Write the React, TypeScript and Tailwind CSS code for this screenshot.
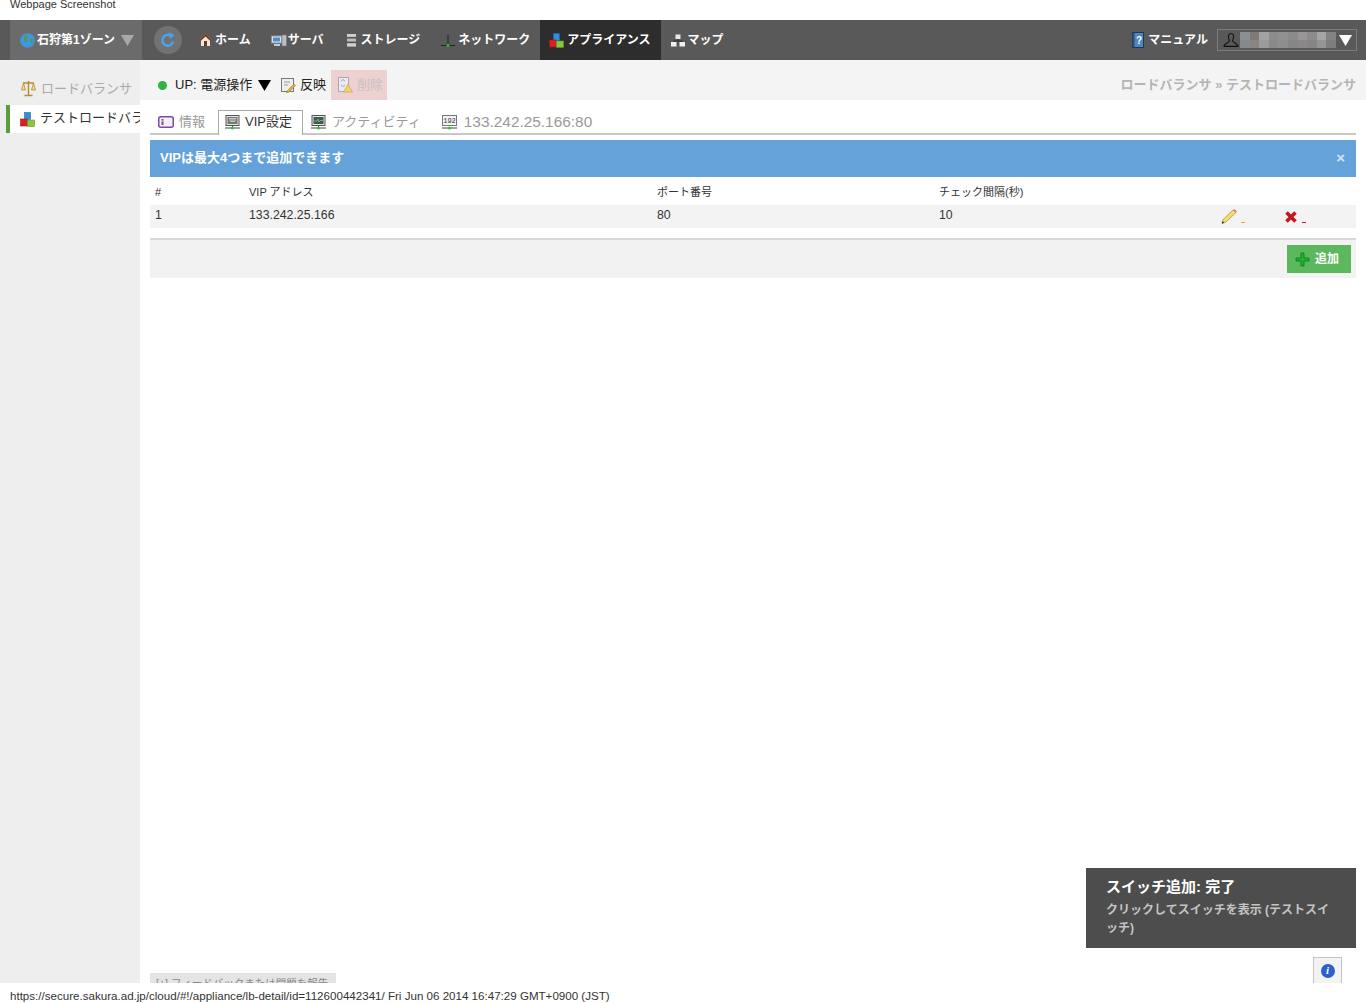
import React from 'react';

const font = "font-['Liberation_Sans','Noto_Sans_CJK_JP',sans-serif]";

const Triangle = ({ className }: { className: string }) => (
  <svg width="13" height="11" viewBox="0 0 13 11" className={`shrink-0 ${className}`}>
    <path d="M0 0 H13 L6.5 11 Z" fill="currentColor" />
  </svg>
);

const Globe = () => (
  <svg width="15" height="15" viewBox="0 0 16 16" className="shrink-0">
    <circle cx="8" cy="8" r="7.8" fill="#3f97e0" />
    <path d="M4 3 L7.5 2 L9 3.5 L7 6.5 L7.5 9 L5.8 11 L4.5 8 Z" fill="#4c9a5e" />
    <path d="M10.5 6.5 L14.5 6.5 L14 9.5 L11.5 11.5 Z" fill="#4c9a5e" />
  </svg>
);

const Refresh = () => (
  <svg width="16" height="16" viewBox="0 0 16 16">
    <path d="M13.2 9.5 A5.5 5.5 0 1 1 10.5 3.4" fill="none" stroke="#45a6f2" strokeWidth="2.4" />
    <path d="M9 0.5 L14.5 3 L10 7 Z" fill="#45a6f2" />
  </svg>
);

const HomeIcon = () => (
  <svg width="13" height="14" viewBox="0 0 13 14" className="shrink-0">
    <path d="M6.5 1 L12.5 7 L11 7 L11 13 L2 13 L2 7 L0.5 7 Z" fill="#efe6d6" />
    <path d="M6.5 1 L12.5 7 L10.8 7.6 L6.5 3.4 L2.2 7.6 L0.5 7 Z" fill="#7a2f1c" />
    <rect x="5" y="8" width="3" height="5" fill="#6a3a20" />
  </svg>
);

const ServerIcon = () => (
  <svg width="16" height="13" viewBox="0 0 16 13" className="shrink-0">
    <rect x="0.5" y="2" width="10" height="7" fill="#dfe6ee" stroke="#8795a3" />
    <rect x="2" y="3.5" width="7" height="4" fill="#4d8fd0" />
    <rect x="3" y="10" width="6" height="2" fill="#c5cbd2" />
    <rect x="11" y="1" width="4.5" height="11" fill="#b9bfc6" stroke="#777" strokeWidth="0.6" />
  </svg>
);

const StorageIcon = () => (
  <svg width="9" height="13" viewBox="0 0 9 13" className="shrink-0">
    <rect x="0" y="0" width="9" height="3.4" fill="#cfcfcf" />
    <rect x="0" y="4.6" width="9" height="3.4" fill="#bdbdbd" />
    <rect x="0" y="9.2" width="9" height="3.4" fill="#cfcfcf" />
    <path d="M0 3.4 H9 M0 8 H9" stroke="#444" strokeWidth="0.8" />
  </svg>
);

const NetIcon = () => (
  <svg width="14" height="13" viewBox="0 0 14 13" className="shrink-0">
    <path d="M7 1 V11" stroke="#222" strokeWidth="1" />
    <path d="M0 11.5 H14" stroke="#222" strokeWidth="1" />
    <circle cx="7" cy="11.5" r="1.4" fill="#35c13a" />
  </svg>
);

const Blocks = () => (
  <svg width="15" height="15" viewBox="0 0 15 15" className="shrink-0">
    <rect x="4.5" y="0.5" width="6" height="7" fill="#2f8fd8" stroke="#1e6aa8" strokeWidth="0.6" />
    <rect x="0.5" y="7" width="7" height="7" fill="#dc1f26" stroke="#a3141a" strokeWidth="0.6" />
    <rect x="7.5" y="8" width="7" height="6.5" fill="#8cc63f" stroke="#659a25" strokeWidth="0.6" />
  </svg>
);

const MapIcon = () => (
  <svg width="14" height="13" viewBox="0 0 14 13" className="shrink-0">
    <rect x="4.5" y="0.5" width="5" height="4.5" fill="#e8e8e8" />
    <rect x="0" y="8" width="5.5" height="4.5" fill="#f0f0f0" />
    <rect x="8.5" y="8" width="5.5" height="4.5" fill="#f0f0f0" />
    <path d="M7 5 V7 M3 8 V7 H11 V8" stroke="#222" strokeWidth="0.8" fill="none" />
  </svg>
);

const BookIcon = () => (
  <svg width="12" height="16" viewBox="0 0 12 16" className="shrink-0">
    <rect x="0.5" y="0.5" width="11" height="15" fill="#4f86c0" stroke="#22364d" />
    <rect x="0.5" y="0.5" width="2" height="15" fill="#2d4f75" />
    <text x="7" y="12" fontSize="10" fill="#fff" textAnchor="middle" fontFamily="Liberation Sans">?</text>
  </svg>
);

const UserIcon = () => (
  <svg width="16" height="16" viewBox="0 0 15 15" className="shrink-0">
    <path d="M5 3.5 A2.6 3 0 0 1 10 3.5 C10 6 9 7.5 9 8.5 C9 10 14 10.5 14 13.5 L1 13.5 C1 10.5 6 10 6 8.5 C6 7.5 5 6 5 3.5 Z" fill="none" stroke="#111" strokeWidth="1" />
  </svg>
);

const Scale = () => (
  <svg width="15" height="17" viewBox="0 0 15 17" className="shrink-0">
    <path d="M7.5 1 V15 M3.5 15.5 H11.5 M2 3 H13" stroke="#b8892e" strokeWidth="1.4" />
    <path d="M2.5 3 L0.5 10 H4.5 Z M12.5 3 L10.5 10 H14.5 Z" fill="#ecd9a6" stroke="#b8892e" strokeWidth="0.8" />
  </svg>
);

const ApplyIcon = () => (
  <svg width="15" height="15" viewBox="0 0 15 15" className="shrink-0">
    <rect x="0.5" y="0.5" width="12" height="13" fill="#eee" stroke="#777" />
    <path d="M3 4 H9 M3 7 H7" stroke="#999" strokeWidth="1" />
    <path d="M6 13 L13 6 L14.5 7.5 L7.5 14.5 L5.5 15 Z" fill="#e4b23c" stroke="#8a6a1e" strokeWidth="0.5" />
  </svg>
);

const DeleteIcon = () => (
  <svg width="15" height="16" viewBox="0 0 15 16" className="shrink-0 opacity-80">
    <rect x="0.5" y="0.5" width="10" height="14" fill="#eef0f5" stroke="#9a9fb0" />
    <path d="M3 4 L5 2.5 L7 4 M3 8 L5 9.5 L7 8" stroke="#7d93c9" strokeWidth="0.9" fill="none" />
    <path d="M10 7 L14.5 15 H5.5 Z" fill="#f0d24a" stroke="#a88f1e" strokeWidth="0.5" />
  </svg>
);

const InfoTab = () => (
  <svg width="16" height="12" viewBox="0 0 16 12" className="shrink-0">
    <rect x="0.75" y="0.75" width="14.5" height="10.5" rx="2" fill="#f3eef8" stroke="#7b4a9e" strokeWidth="1.5" />
    <rect x="3.5" y="3" width="2" height="1.6" fill="#7b4a9e" />
    <rect x="3.5" y="5.4" width="2" height="3.6" fill="#7b4a9e" />
  </svg>
);

const Monitor = ({ pulse }: { pulse?: boolean }) => (
  <svg width="15" height="15" viewBox="0 0 15 15" className="shrink-0">
    <rect x="1" y="0.5" width="13" height="10" fill="#e4e4e4" stroke="#555" />
    <rect x="2.5" y="2" width="10" height="7" fill={pulse ? '#44584c' : '#777'} />
    {pulse ? (
      <path d="M3 6 H6 L7 4 L8 7 L9 5.5 H12" stroke="#6fe08a" strokeWidth="0.7" fill="none" />
    ) : (
      <path d="M4 3.5 H11 M4 5 H11 M5 6.5 H10" stroke="#ddd" strokeWidth="0.8" />
    )}
    <path d="M0 13 H15" stroke="#444" strokeWidth="1" />
    <path d="M7.5 10.5 V13" stroke="#444" />
    <circle cx="7.5" cy="13" r="1.5" fill="#35c13a" />
  </svg>
);

const Ip = () => (
  <svg width="15" height="15" viewBox="0 0 15 15" className="shrink-0">
    <rect x="0.5" y="0.5" width="14" height="10" fill="#f4f4f4" stroke="#777" />
    <text x="7.5" y="8" fontSize="7" fill="#333" textAnchor="middle" fontFamily="Liberation Mono">192</text>
    <path d="M0 13 H15" stroke="#444" strokeWidth="1" />
    <circle cx="7.5" cy="13" r="1.5" fill="#35c13a" />
  </svg>
);

const Pencil = () => (
  <svg width="18" height="17" viewBox="0 0 18 16" className="shrink-0">
    <path d="M2 15 L3 11 L13 1.5 L16 4 L6 13.5 Z" fill="#f2dc6b" stroke="#a8903a" strokeWidth="0.7" />
    <path d="M13 1.5 L14.5 0.5 L17 3 L16 4 Z" fill="#e57d7d" />
    <path d="M2 15 L2.6 12.8 L4.2 14.2 Z" fill="#111" />
  </svg>
);

const RedX = () => (
  <svg width="14" height="14" viewBox="0 0 14 14" className="shrink-0">
    <path d="M2.5 2.5 L11.5 11.5 M11.5 2.5 L2.5 11.5" stroke="#c5171c" strokeWidth="3.6" />
  </svg>
);

const PlusIcon = () => (
  <svg width="15" height="15" viewBox="0 0 15 15" className="shrink-0">
    <path d="M6 1 H9 V6 H14 V9 H9 V14 H6 V9 H1 V6 H6 Z" fill="#1fb32f" stroke="#0a7a17" strokeWidth="0.8" />
  </svg>
);

const navItems = [
  { icon: <HomeIcon />, label: 'ホーム', wrap: 'mr-5', gap: 'gap-[3px]' },
  { icon: <ServerIcon />, label: 'サーバ', wrap: 'mr-[23px]', gap: 'gap-[1px]' },
  { icon: <StorageIcon />, label: 'ストレージ', wrap: 'mr-[21px]', gap: 'gap-[5px]' },
  { icon: <NetIcon />, label: 'ネットワーク', wrap: 'mr-[10px]', gap: 'gap-[3px]' },
];

const blur = [
  '#8a8f90', '#7d7a78', '#a3a3a3', '#8d8d8d', '#919191', '#8b8b8b', '#9a9696', '#8c8c8c', '#a5a5a5', '#838383',
  '#84898c', '#8a8482', '#9b9b9b', '#8a8a8a', '#8e8e8e', '#868686', '#8a8888', '#868686', '#949494', '#7d7d7d',
];

export default function App() {
  return (
    <div className={`${font} relative flex h-[1003px] w-[1366px] flex-col overflow-hidden bg-white text-[#333]`}>
      {/* screenshot title */}
      <div className="h-5 shrink-0 overflow-hidden pl-2.5 text-[11px] leading-[9px] text-[#333]">Webpage Screenshot</div>

      {/* top nav */}
      <header className="flex h-10 shrink-0 items-stretch bg-[#595959] pl-2.5 text-[12px] font-bold text-white">
        <div className="flex w-[132px] items-center bg-[#6b6b6b] pl-[10px]">
          <Globe />
          <span className="ml-[2px] w-[80px] whitespace-nowrap">石狩第1ゾーン</span>
          <Triangle className="ml-1 text-[#a8a8a8]" />
        </div>
        <div className="ml-3 flex w-[28px] items-center">
          <div className="flex h-7 w-7 items-center justify-center rounded-full bg-[#727272]">
            <Refresh />
          </div>
        </div>
        <nav className="ml-[17px] flex items-center">
          {navItems.map(item => (
            <div key={item.label} className={`flex items-center ${item.gap} ${item.wrap}`}>
              {item.icon}
              <span className="whitespace-nowrap">{item.label}</span>
            </div>
          ))}
          <div className="flex h-10 items-center gap-[3px] bg-[#2d2d2d] pl-[9px] pr-[10px]">
            <Blocks />
            <span className="whitespace-nowrap">アプライアンス</span>
          </div>
          <div className="ml-[10px] flex items-center gap-[3px]">
            <MapIcon />
            <span className="whitespace-nowrap">マップ</span>
          </div>
        </nav>
        <div className="ml-auto flex items-center pr-[9px]">
          <BookIcon />
          <span className="ml-[4px] whitespace-nowrap">マニュアル</span>
          <div className="ml-[9px] flex h-[22px] w-[140px] items-center border border-[#7d7d7d] pl-[5px]">
            <UserIcon />
            <div className="ml-[1px] grid h-4 w-[96px] grid-cols-10 grid-rows-2">
              {blur.map((c, i) => (
                <div key={i} style={{ backgroundColor: c }} />
              ))}
            </div>
            <Triangle className="ml-[3px] text-white" />
          </div>
        </div>
      </header>

      <div className="flex min-h-0 flex-1">
        {/* sidebar */}
        <aside className="w-[140px] shrink-0 overflow-hidden bg-[#eeeeee] pl-[6px] pt-[21px]">
          <div className="flex h-[15px] items-center gap-[5px] pl-[15px] text-[13px] text-[#aaa]">
            <Scale />
            <span className="whitespace-nowrap">ロードバランサ</span>
          </div>
          <div className="mt-[9px] flex h-7 items-center gap-[5px] overflow-hidden border-l-4 border-[#5a9e3c] bg-white pl-[10px] text-[13px] text-[#333]">
            <Blocks />
            <span className="whitespace-nowrap pb-[2px]">テストロードバランサ</span>
          </div>
        </aside>

        <main className="min-w-0 flex-1">
          {/* toolbar */}
          <div className="flex h-10 items-end bg-[#f4f4f4] pl-[18px] pr-[10px] text-[13px] text-[#222]">
            <div className="flex h-[30px] items-center">
              <span className="h-[9px] w-[9px] rounded-full bg-[#2fb344]" />
              <span className="ml-2 w-[78px] whitespace-nowrap">UP: 電源操作</span>
              <Triangle className="ml-[5px] text-black" />
              <span className="ml-[10px]"><ApplyIcon /></span>
              <span className="ml-1 whitespace-nowrap">反映</span>
              <div className="ml-[5px] flex h-[30px] w-14 items-center gap-1 bg-[#edd0d0] pl-[7px] text-[#c8c0c0]">
                <DeleteIcon />
                <span className="whitespace-nowrap">削除</span>
              </div>
            </div>
            <div className="ml-auto h-[25px] whitespace-nowrap text-[13px] font-bold text-[#b5b5b5]">ロードバランサ » テストロードバランサ</div>
          </div>

          <div className="px-2.5">
            {/* tabs */}
            <div className="flex h-[35px] items-end border-b-2 border-[#c8c8c8] text-[13px] text-[#999]">
              <div className="flex h-[22px] items-center gap-[5px] pl-2 pr-[13px]">
                <InfoTab />
                <span>情報</span>
              </div>
              <div className="-mb-[2px] flex h-[25px] w-[85px] items-center gap-[5px] border border-b-0 border-[#aaa] bg-white pb-[2px] pl-[6px] text-[#333]">
                <Monitor />
                <span className="whitespace-nowrap">VIP設定</span>
              </div>
              <div className="flex h-[22px] items-center gap-[6px] pl-2 pr-[21px]">
                <Monitor pulse />
                <span className="whitespace-nowrap">アクティビティ</span>
              </div>
              <div className="flex h-[22px] items-center gap-[7px]">
                <Ip />
                <span className="whitespace-nowrap text-[15.4px]">133.242.25.166:80</span>
              </div>
            </div>

            {/* info alert */}
            <div className="mt-[5px] flex h-[37px] items-center justify-between bg-[#65a2d9] pb-[1px] pl-2.5 pr-[11px] text-[13px] font-bold text-white">
              <span>VIPは最大4つまで追加できます</span>
              <span className="pb-[2px] text-[15px] leading-none text-[#d5e4f3]">×</span>
            </div>

            {/* table */}
            <div className="grid h-[28px] grid-cols-[94px_408px_282px_1fr] items-center px-[5px] pt-[3px] text-[11px] text-[#333]">
              <div>#</div>
              <div>VIP アドレス</div>
              <div>ポート番号</div>
              <div>チェック間隔(秒)</div>
            </div>
            <div className="grid h-[23px] grid-cols-[94px_408px_282px_281px_64px_1fr] items-center bg-[#f3f3f3] px-[5px] text-[12.3px] text-[#333]">
              <div className="pb-[2px]">1</div>
              <div className="pb-[2px]">133.242.25.166</div>
              <div className="pb-[2px]">80</div>
              <div className="pb-[2px]">10</div>
              <div className="flex items-end gap-[3px]">
                <Pencil />
                <span className="mb-[2px] h-[1px] w-1 bg-[#e8a33a]" />
              </div>
              <div className="flex items-end gap-[4px]">
                <RedX />
                <span className="mb-[1px] h-[1px] w-1 bg-[#c5171c]" />
              </div>
            </div>

            {/* footer actions */}
            <div className="mt-[10px] flex h-10 items-center justify-end border-t-2 border-[#d8d8d8] bg-[#f2f2f2] pr-[5px]">
              <button className="flex h-7 w-16 items-center gap-[5px] bg-[#5cb85c] pl-2 text-[12px] font-bold text-white">
                <PlusIcon />
                <span>追加</span>
              </button>
            </div>
          </div>
        </main>
      </div>

      {/* status line */}
      <div className="relative z-10 h-5 shrink-0 bg-white pl-2.5 pt-[1px] text-[11.58px] leading-[24px] text-[#333]">
        https://secure.sakura.ad.jp/cloud/#!/appliance/lb-detail/id=112600442341/ Fri Jun 06 2014 16:47:29 GMT+0900 (JST)
      </div>

      {/* overlays */}
      <div className="absolute bottom-[20px] left-[150px] h-[10px] w-[186px] overflow-hidden bg-[#e4e4e4] pl-[6px] text-[10.5px] leading-[20px] text-[#888]">
        [+] フィードバックまたは問題を報告
      </div>
      <div className="absolute left-[1086px] top-[868px] h-20 w-[270px] bg-[#4d4d4d] px-5 pt-[9px] text-white">
        <div className="text-[15px] font-bold leading-[20px]">スイッチ追加: 完了</div>
        <div className="mt-[4px] text-[12px] font-bold leading-[18px] text-[#c4c4c4]">クリックしてスイッチを表示 (テストスイッチ)</div>
      </div>
      <div className="absolute bottom-[20px] left-[1313px] flex h-[26px] w-[29px] items-center justify-center border border-b-0 border-[#c4c4c4] bg-[#f3f3f3]">
        <span className="flex h-[14px] w-[14px] items-center justify-center rounded-full bg-[#2f5fc9] font-['Liberation_Serif',serif] text-[11px] font-bold italic leading-none text-white">i</span>
      </div>
    </div>
  );
}
